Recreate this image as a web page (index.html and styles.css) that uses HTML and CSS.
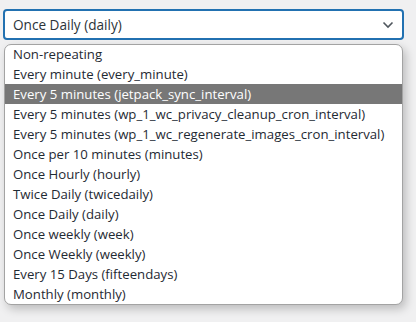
FILE: index.html
```html
<!DOCTYPE html>
<html>
<head>
<meta charset="utf-8">
<link rel="stylesheet" href="styles.css">
</head>
<body>
<div class="wrap">
  <div class="select">
    <span class="value">Once Daily (daily)</span>
    <svg class="chev" width="12" height="8" viewBox="0 0 12 8"><path d="M1.5 1.5 L6 6 L10.5 1.5" fill="none" stroke="#50575e" stroke-width="1.6"/></svg>
  </div>
  <ul class="list">
    <li>Non-repeating</li>
    <li>Every minute (every_minute)</li>
    <li class="hl">Every 5 minutes (jetpack_sync_interval)</li>
    <li>Every 5 minutes (wp_1_wc_privacy_cleanup_cron_interval)</li>
    <li>Every 5 minutes (wp_1_wc_regenerate_images_cron_interval)</li>
    <li>Once per 10 minutes (minutes)</li>
    <li>Once Hourly (hourly)</li>
    <li>Twice Daily (twicedaily)</li>
    <li>Once Daily (daily)</li>
    <li>Once weekly (week)</li>
    <li>Once Weekly (weekly)</li>
    <li>Every 15 Days (fifteendays)</li>
    <li>Monthly (monthly)</li>
  </ul>
</div>
</body>
</html>
```
FILE: styles.css
```css
html, body {
  margin: 0;
  padding: 0;
  background: #f0f0f1;
  width: 416px;
  height: 322px;
  overflow: hidden;
}
.wrap {
  padding: 9px 0 0 3px;
  font-family: "Open Sans", "Noto Sans", sans-serif;
  font-size: 13.2px;
}
.select {
  box-sizing: border-box;
  width: 401px;
  height: 31px;
  border: 2px solid #2271b1;
  border-radius: 4px;
  background: #fff;
  display: flex;
  align-items: center;
  justify-content: space-between;
  padding: 0 8px 0 8px;
  color: #2c3338;
}
.value {
  font-size: 13.6px;
}
.chev {
  display: block;
  margin-top: 1px;
}
.list {
  list-style: none;
  margin: 4px 0 0 1px;
  padding: 0;
  width: 399px;
  box-sizing: border-box;
  border: 1px solid #a3a3a3;
  border-radius: 7px;
  background: #fff;
  box-shadow: 3px 4px 10px rgba(0,0,0,0.22);
  overflow: hidden;
}
.list li {
  height: 20px;
  line-height: 20px;
  padding-left: 8px;
  color: #1f2a33;
  white-space: nowrap;
}
.list li:first-child {
  height: 19px;
  line-height: 19px;
}
.list li.hl {
  background: #777777;
  color: #fff;
}
```
